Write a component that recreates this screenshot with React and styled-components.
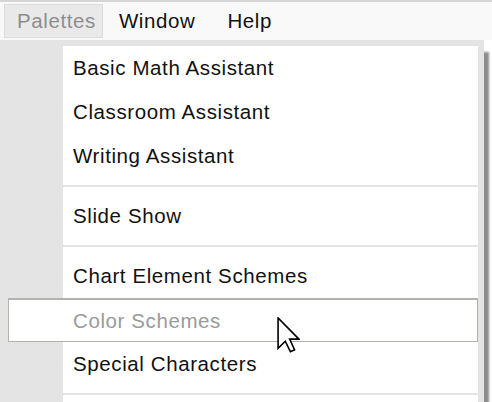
import styled, { createGlobalStyle } from "styled-components";

const GlobalStyle = createGlobalStyle`
  html, body {
    margin: 0;
    padding: 0;
    background: #ffffff;
    overflow: hidden;
  }
  body {
    font-family: "Liberation Sans", Arial, sans-serif;
  }
`;

const groups = [
  ["Basic Math Assistant", "Classroom Assistant", "Writing Assistant"],
  ["Slide Show"],
  ["Chart Element Schemes", "Color Schemes", "Special Characters"],
];

const highlighted = "Color Schemes";

const App = () => {
  return (
    <Page>
      <GlobalStyle />
      <MenuBar>
        <MenuTitle active>Palettes</MenuTitle>
        <MenuTitle>Window</MenuTitle>
        <MenuTitle>Help</MenuTitle>
      </MenuBar>
      <Dropdown>
        {groups.map((group, gi) => (
          <Group key={gi}>
            {gi > 0 && <Separator />}
            {group.map((label) =>
              label === highlighted ? (
                <HoverItem key={label}>
                  {label}
                  <Cursor />
                </HoverItem>
              ) : (
                <Item key={label}>{label}</Item>
              )
            )}
          </Group>
        ))}
        <Separator />
      </Dropdown>
    </Page>
  );
};

const Cursor = () => (
  <CursorIcon viewBox="0 0 12 19" width="23" height="36">
    <polygon
      points="0.5,0.5 0.5,16.5 4.3,12.8 7,18.3 9.2,17.3 6.6,11.7 11.5,11.7"
      fill="#ffffff"
      stroke="#000000"
      strokeWidth="0.85"
      strokeLinejoin="miter"
    />
  </CursorIcon>
);

export default App;

const Page = styled.div`
  width: 492px;
  height: 402px;
  overflow: hidden;
  background: #ffffff;
  font-size: 20.5px;
  letter-spacing: 0.6px;
  color: #111111;
`;

const MenuBar = styled.div`
  height: 38px;
  border-top: 2px solid #d6d6d6;
  background: #f9f9f9;
  display: flex;
  align-items: center;
  padding-left: 4px;
`;

const MenuTitle = styled.div`
  height: 34px;
  box-sizing: border-box;
  display: flex;
  align-items: center;
  padding: ${(p) => (p.active ? "0 6px 0 12px" : "0 15px")};
  background: ${(p) => (p.active ? "#e9e9e9" : "transparent")};
  border: 1px solid ${(p) => (p.active ? "#dcdcdc" : "transparent")};
  color: ${(p) => (p.active ? "#8d8d8d" : "#111111")};
`;

const Dropdown = styled.div`
  width: 478px;
  padding-bottom: 30px;
  border-top: 6px solid #e4e4e4;
  border-right: 6px solid #e4e4e4;
  background: linear-gradient(to right, #e4e4e4 63px, #ffffff 63px);
  box-shadow: 5px 12px 2px rgba(0, 0, 0, 0.45);
`;

const Group = styled.div`
  display: flex;
  flex-direction: column;
`;

const Item = styled.div`
  height: 44px;
  display: flex;
  align-items: center;
  padding-left: 73px;
`;

const HoverItem = styled.div`
  position: relative;
  height: 44px;
  box-sizing: border-box;
  margin: 0 0 0 8px;
  padding-left: 64px;
  display: flex;
  align-items: center;
  background: #ffffff;
  border: 1px solid #b3b3ab;
  border-top-width: 2px;
  color: #9a9a9a;
`;

const CursorIcon = styled.svg`
  position: absolute;
  left: 268px;
  top: 17px;
`;

const Separator = styled.div`
  height: 2px;
  margin: 7px 0 7px 63px;
  background: #e4e4e4;
`;
